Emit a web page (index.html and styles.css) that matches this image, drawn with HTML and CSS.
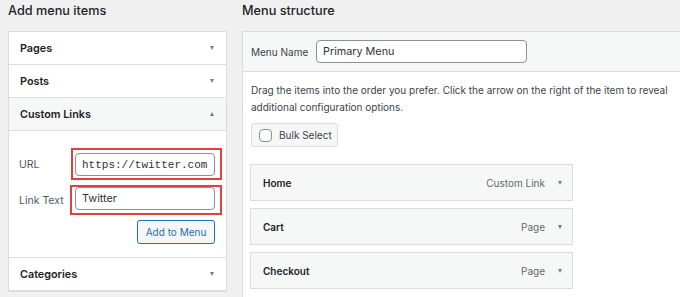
FILE: index.html
```html
<!DOCTYPE html>
<html lang="en">
<head>
  <meta charset="UTF-8" />
  <title>Menus</title>
  <link rel="stylesheet" href="styles.css">
</head>
<body>
  <div class="screen">
    <div class="col-left">
      <h2>Add menu items</h2>
      <div class="accordion">
        <div class="acc-row"><span>Pages</span><i class="arrow down"></i></div>
        <div class="acc-row"><span>Posts</span><i class="arrow down"></i></div>
        <div class="acc-row open"><span>Custom Links</span><i class="arrow up"></i></div>
        <div class="acc-body">
          <div class="field">
            <label>URL</label>
            <div class="mark mark-url"><input class="mono" type="text" value="https://twitter.com/" /></div>
          </div>
          <div class="field">
            <label>Link Text</label>
            <div class="mark mark-text"><input type="text" value="Twitter" /></div>
          </div>
          <div class="actions">
            <button class="btn-add">Add to Menu</button>
          </div>
        </div>
        <div class="acc-row last"><span>Categories</span><i class="arrow down"></i></div>
      </div>
    </div>

    <div class="col-right">
      <h2>Menu structure</h2>
      <div class="panel">
        <div class="panel-head">
          <label>Menu Name</label>
          <input class="menu-name" type="text" value="Primary Menu" />
        </div>
        <div class="panel-body">
          <p class="desc">Drag the items into the order you prefer. Click the arrow on the right of the item to reveal additional configuration options.</p>
          <div class="bulk"><span class="check"></span>Bulk Select</div>
          <ul class="items">
            <li><b>Home</b><span class="type">Custom Link</span><i class="arrow down"></i></li>
            <li><b>Cart</b><span class="type">Page</span><i class="arrow down"></i></li>
            <li><b>Checkout</b><span class="type">Page</span><i class="arrow down"></i></li>
          </ul>
        </div>
      </div>
    </div>
  </div>
</body>
</html>
```

FILE: styles.css
```css
html, body {
  margin: 0;
  padding: 0;
  height: 100%;
  overflow: hidden;
  background: #f0f0f1;
  font-family: Inter, "Noto Sans", sans-serif;
  font-size: 10px;
  color: #1d2327;
}
.screen {
  display: flex;
  padding-left: 8px;
}
h2 {
  margin: 0 0 9px;
  font-size: 12.7px;
  font-weight: 500;
  line-height: 22px;
  color: #1d2327;
}
.col-left {
  width: 219px;
  flex-shrink: 0;
}
.col-right {
  margin-left: 15px;
  flex: 1;
  min-width: 460px;
}
.accordion {
  background: #fff;
  border: 1px solid #dcdcde;
  border-bottom-width: 2px;
}
.acc-row {
  display: flex;
  align-items: center;
  justify-content: space-between;
  height: 32px;
  padding: 0 12px 0 11px;
  border-bottom: 1px solid #dcdcde;
  font-size: 10.8px;
  font-weight: 600;
}
.acc-row.open {
  background: #f6f7f7;
}
.acc-row.last {
  border-bottom: none;
}
.arrow {
  display: inline-block;
  width: 0;
  height: 0;
  border-left: 2.5px solid transparent;
  border-right: 2.5px solid transparent;
}
.arrow.down {
  border-top: 4px solid #787c82;
}
.arrow.up {
  border-bottom: 4px solid #787c82;
}
.acc-body {
  height: 96px;
  padding: 17px 3px 13px 10px;
  border-bottom: 1px solid #dcdcde;
}
.field {
  display: flex;
  align-items: center;
  margin-bottom: 5px;
}
.field label {
  width: 52px;
  font-size: 10.5px;
  color: #50575e;
}
.mark {
  border: 2px solid #e2403f;
}
.mark-url {
  padding: 3px 5px 2px 2px;
}
.mark-text {
  margin-left: -1px;
  padding: 0 5px 3px 3px;
}
input {
  box-sizing: border-box;
  display: block;
  width: 140px;
  height: 23px;
  padding: 0 6px;
  border: 1px solid #8c8f94;
  border-radius: 4px;
  font-family: inherit;
  font-size: 10.8px;
  color: #2c3338;
  background: #fff;
}
input.mono {
  font-family: "Liberation Mono", "DejaVu Sans Mono", monospace;
  font-size: 11px;
}
.actions {
  display: flex;
  justify-content: flex-end;
  padding-right: 8px;
}
.btn-add {
  box-sizing: border-box;
  width: 78px;
  height: 24px;
  padding: 0;
  border: 1px solid #2271b1;
  border-radius: 3px;
  background: #f6f7f7;
  color: #2271b1;
  font-family: inherit;
  font-size: 10px;
}
.panel {
  background: #fff;
  border-left: 1px solid #dcdcde;
  border-top: 1px solid #dcdcde;
  height: 300px;
}
.panel-head {
  display: flex;
  align-items: center;
  height: 39px;
  padding-left: 8px;
  background: #f6f7f7;
  border-bottom: 1px solid #dcdcde;
}
.panel-head label {
  width: 65px;
  color: #3c434a;
}
.menu-name {
  width: 211px;
  padding: 0 6px;
}
.panel-body {
  padding: 10px 8px 0 8px;
}
.desc {
  margin: 0 0 7px;
  line-height: 17px;
  color: #3c434a;
}
.bulk {
  box-sizing: border-box;
  display: inline-flex;
  align-items: center;
  gap: 7px;
  width: 87px;
  height: 24px;
  padding-left: 7px;
  background: #f6f7f7;
  border: 1px solid #dcdcde;
  border-radius: 3px;
  color: #3c434a;
}
.check {
  box-sizing: border-box;
  width: 13px;
  height: 13px;
  border: 1px solid #8c8f94;
  border-radius: 4px;
  background: #fff;
}
.items {
  list-style: none;
  margin: 17px 0 0 -1px;
  padding: 0;
  width: 323px;
}
.items li {
  box-sizing: border-box;
  display: flex;
  align-items: center;
  height: 37px;
  margin-bottom: 7px;
  padding: 0 10px 0 12px;
  background: #f6f7f7;
  border: 1px solid #dcdcde;
}
.items b {
  flex: 1;
  font-weight: 600;
  color: #1d2327;
}
.items .type {
  color: #646970;
  margin-right: 13px;
}
```
